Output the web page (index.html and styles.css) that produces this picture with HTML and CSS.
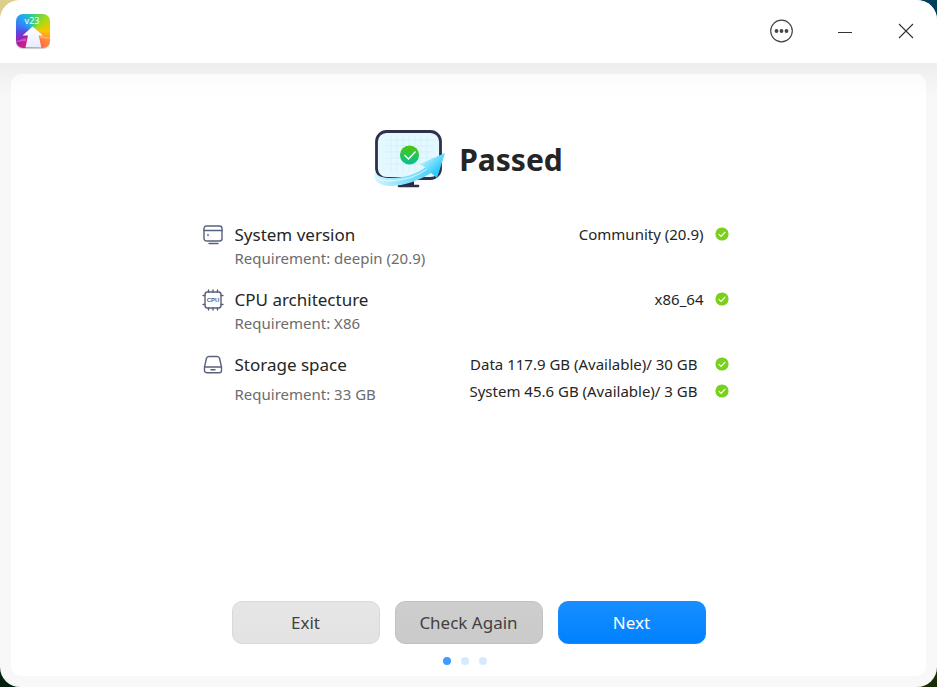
FILE: index.html
```
<!DOCTYPE html>
<html lang="en">
<head>
  <meta charset="UTF-8">
  <meta name="viewport" content="width=device-width, initial-scale=1.0">
  <title>Upgrade to v23</title>
  <link rel="stylesheet" href="styles.css">
</head>
<body>

  <!-- shared icons -->
  <svg class="sprite" aria-hidden="true">
    <symbol id="icon-ok" viewBox="0 0 14 14">
      <circle cx="7" cy="7" r="6.6" fill="#7bd01e"/>
      <path d="M3.8 7.2l2.3 2.2 4.2-4.5" fill="none" stroke="#fff" stroke-width="1.1"/>
    </symbol>
  </svg>

  <div class="window">
    <header class="titlebar">
      <svg class="app-logo" viewBox="0 0 34 34" role="img" aria-label="Upgrade tool">
        <defs>
          <linearGradient id="arrow" x1="0" y1="0" x2="0" y2="1">
            <stop offset="0" stop-color="#fff"/>
            <stop offset="1" stop-color="#e6ebff"/>
          </linearGradient>
        </defs>
        <path d="M0 27l10-3v3L0 28zM24 21l10 3v1l-10-1z" fill="#fff" opacity=".25"/>
        <path d="M16.6 12.5L27 21.500h-4.200l2.500 12H9.500l2.500-12H6.500z" fill="url(#arrow)"/>
        <text x="16" y="9.500" text-anchor="middle" class="logo-text">v23</text>
      </svg>
      <div class="window-controls">
        <button type="button" aria-label="Menu">
          <svg width="24" height="24" viewBox="0 0 24 24">
            <circle cx="11.500" cy="12" r="10.800" fill="none" stroke="#454545" stroke-width="1.2"/>
            <circle cx="6.500" cy="12" r="1.900" fill="#454545"/>
            <circle cx="11.500" cy="12" r="1.900" fill="#454545"/>
            <circle cx="16.500" cy="12" r="1.900" fill="#454545"/>
          </svg>
        </button>
        <button type="button" aria-label="Minimize">
          <svg width="24" height="24" viewBox="0 0 24 24"><path d="M6 13.500h14" stroke="#333" stroke-width="1.1"/></svg>
        </button>
        <button type="button" aria-label="Close">
          <svg width="24" height="24" viewBox="0 0 24 24"><path d="M5 5l14 14M19 5L5 19" stroke="#333" stroke-width="1.1"/></svg>
        </button>
      </div>
    </header>

    <main class="panel">
      <div class="result">
        <svg class="result-art" viewBox="0 0 72 60" aria-hidden="true">
          <defs>
            <linearGradient id="badge" x1="0" y1="0" x2="0" y2="1">
              <stop offset="0" stop-color="#4fc800"/>
              <stop offset="1" stop-color="#04bf9a"/>
            </linearGradient>
            <linearGradient id="swoosh" x1="0" y1="0" x2="1" y2="0">
              <stop offset="0" stop-color="#d4f5ff"/>
              <stop offset=".5" stop-color="#8be2fb"/>
              <stop offset="1" stop-color="#4fd3fb"/>
            </linearGradient>
            <linearGradient id="head" x1="0" y1="0" x2="1" y2="1">
              <stop offset=".2" stop-color="#b5f0ff"/>
              <stop offset=".7" stop-color="#2ecafb"/>
            </linearGradient>
          </defs>
          <path d="M28 49h12v6H28z" fill="#252b43"/>
          <path d="M25 56h19" stroke="#2d3149" stroke-width="2.600" stroke-linecap="round"/>
          <rect x="2.500" y="1.500" width="64" height="47" rx="10" fill="#e3f8ff" stroke="#2d3149" stroke-width="2.800"/>
          <path d="M11 10h49M11 16h49M11 22h49M11 28h49M11 34h49M17 6v36M23 6v36M29 6v36M35 6v36M41 6v36M47 6v36M53 6v36" stroke="#cdf1fb" stroke-width=".7" fill="none"/>
          <circle cx="35.500" cy="25" r="9.600" fill="url(#badge)"/>
          <path d="M30.500 25l4 4 7-7.500" fill="none" stroke="#fff" stroke-width="1.3"/>
          <path d="M1 40c1 6 7 8 15 8 15 0 27-4 36-11l5 6C46 50 32 55.500 17 56 4 56-2 50 1 40z" fill="url(#swoosh)"/>
          <path d="M0 43c2 7 9 8 17 8 14-1 27-5 36-12" fill="none" stroke="#e6fbff" stroke-width="1.4" opacity=".7"/>
          <path d="M71 23L46 34l6 4 5 5 6 5z" fill="url(#head)"/>
        </svg>
        <h1>Passed</h1>
      </div>

      <ul class="checks">
        <li class="check">
          <svg class="check-icon" viewBox="0 0 20 20">
            <rect x="1" y="1" width="18" height="15" rx="2.500"/>
            <path d="M1 5.500h18M5 9.500v1M6 18.500h9"/>
          </svg>
          <div class="check-info">
            <h2>System version</h2>
            <p>Requirement: deepin (20.9)</p>
          </div>
          <div class="check-values">
            <p class="value">Community (20.9) <svg class="ok" role="img" aria-label="Passed"><use href="#icon-ok"/></svg></p>
          </div>
        </li>
        <li class="check">
          <svg class="check-icon" viewBox="0 0 20 20">
            <rect x="2" y="2" width="16" height="16" rx="2.500"/>
            <path d="M5.500 2V0M10 2V0M14.500 2V0M5.500 20v-2M10 20v-2M14.500 20v-2M2 5.500H0M2 14.500H0M20 5.500h-2M20 14.500h-2"/>
            <text x="10" y="12" text-anchor="middle" class="cpu-text">CPU</text>
          </svg>
          <div class="check-info">
            <h2>CPU architecture</h2>
            <p>Requirement: X86</p>
          </div>
          <div class="check-values">
            <p class="value">x86_64 <svg class="ok" role="img" aria-label="Passed"><use href="#icon-ok"/></svg></p>
          </div>
        </li>
        <li class="check check-storage">
          <svg class="check-icon" viewBox="0 0 20 20">
            <path d="M6 1.500h8c1.600 0 2.300.7 2.600 2L18.500 12v3.500c0 1.400-.8 2.200-2.200 2.200H3.700c-1.400 0-2.200-.8-2.200-2.200V12L3.400 3.500c.3-1.300 1-2 2.600-2zM1.700 12h16.600M8 14.800h4"/>
          </svg>
          <div class="check-info">
            <h2>Storage space</h2>
            <p>Requirement: 33 GB</p>
          </div>
          <div class="check-values">
            <p class="value">Data 117.9 GB (Available)/ 30 GB <svg class="ok" role="img" aria-label="Passed"><use href="#icon-ok"/></svg></p>
            <p class="value">System 45.6 GB (Available)/ 3 GB <svg class="ok" role="img" aria-label="Passed"><use href="#icon-ok"/></svg></p>
          </div>
        </li>
      </ul>

      <div class="actions">
        <button type="button" class="btn">Exit</button>
        <button type="button" class="btn btn-hover">Check Again</button>
        <button type="button" class="btn btn-primary">Next</button>
      </div>
      <div class="steps">
        <span class="step active"></span>
        <span class="step"></span>
        <span class="step"></span>
      </div>
    </main>
  </div>

</body>
</html>
```
FILE: styles.css
```
:root {
  --text: #252525;
  --text-subtle: #6c6c6c;
  --icon: #59627c;
  --blue: #0081ff;
}

*, *::before, *::after { box-sizing: border-box; margin: 0; padding: 0; }

/* desktop behind the window corners */
body {
  font-family: "Noto Sans", sans-serif;
  color: var(--text);
  background:
    linear-gradient(90deg, #dccf8c 50%, #003f5c 50%) top / 100% 50% no-repeat,
    linear-gradient(90deg, #03200f 50%, #1c2c04 50%) bottom / 100% 50% no-repeat;
}

.sprite { display: none; }

.window {
  display: flex;
  flex-direction: column;
  min-height: 100vh;
  border-radius: 20px;
  overflow: hidden;
  background: linear-gradient(#eee 63px, #f8f8f8 100px);
}

/* --- title bar --- */
.titlebar {
  display: flex;
  align-items: center;
  justify-content: space-between;
  height: 63px;
  padding: 0 19px 2px 16px;
  background: #fff;
}
.app-logo {
  width: 34px;
  height: 34px;
  border-radius: 7px;
  background: conic-gradient(from 0deg at 50% 50%, #35cf83, #a4db16 45deg, #ffc400 90deg, #ff8f35 120deg, #ff6547 155deg, #e71d6b 200deg, #a51cae 235deg, #5c46df 265deg, #3b78f4 290deg, #22a9f5 325deg, #35cf83);
  box-shadow: 0 1px 1px #ccc;
}
.logo-text { font-size: 9px; fill: #fff; }
.window-controls { display: flex; gap: 38px; }
.window-controls button {
  width: 24px;
  height: 24px;
  border: 0;
  background: none;
}
.window-controls svg { display: block; }

/* --- content --- */
.panel {
  flex: 1;
  display: flex;
  flex-direction: column;
  margin: 11px;
  padding: 55px 16px 11px;
  border-radius: 10px;
  background: linear-gradient(#fbfbfb, #fff 26px);
}
.result {
  display: flex;
  align-items: center;
  justify-content: center;
  gap: 13px;
  height: 62px;
}
.result-art { width: 72px; height: 60px; }
.result h1 { font-size: 30px; line-height: 40px; font-weight: 700; }

.checks {
  display: flex;
  flex-direction: column;
  gap: 19px;
  width: 100%;
  max-width: 532px;
  margin: 32px auto;
  padding-right: 6px;
  list-style: none;
}
.check { display: flex; gap: 12px; }
.check-icon {
  flex: none;
  width: 20px;
  height: 20px;
  margin-top: 2px;
  overflow: visible;
  fill: none;
  stroke: var(--icon);
  stroke-width: 1.4;
  stroke-linecap: round;
}
.cpu-text { font: 700 6px "Liberation Sans", sans-serif; fill: var(--icon); stroke: none; }
.check-info { flex: 1; }
.check-info h2 { font-size: 17px; line-height: 24px; font-weight: 400; }
.check-info p { font-size: 15px; line-height: 22px; color: var(--text-subtle); }
.check-storage .check-info p { margin-top: 6px; }
.value {
  display: flex;
  align-items: center;
  justify-content: flex-end;
  gap: 11px;
  font-size: 15px;
  line-height: 22px;
}
.check-storage .value { gap: 17px; margin-bottom: 5px; }
.ok { flex: none; width: 14px; height: 14px; }

/* --- buttons --- */
.actions {
  display: flex;
  justify-content: center;
  gap: 15px;
  margin-top: auto;
}
.btn {
  width: 148px;
  height: 43px;
  border: 1px solid #d8d8d8;
  border-radius: 10px;
  font-family: inherit;
  font-size: 17px;
  color: #414141;
  background: linear-gradient(#e6e6e6, #e3e3e3);
}
.btn-hover { border-color: #c2c2c2; background: linear-gradient(#cecece, #cacaca); }
.btn-primary { border-color: #168aff; color: #fff; background: linear-gradient(#188eff, var(--blue)); }

.steps {
  display: flex;
  justify-content: center;
  gap: 10px;
  margin-top: 13px;
  padding-right: 8px;
}
.step { width: 8px; height: 8px; border-radius: 50%; background: #d6eaff; }
.step.active { background: #3b9dff; }
```
